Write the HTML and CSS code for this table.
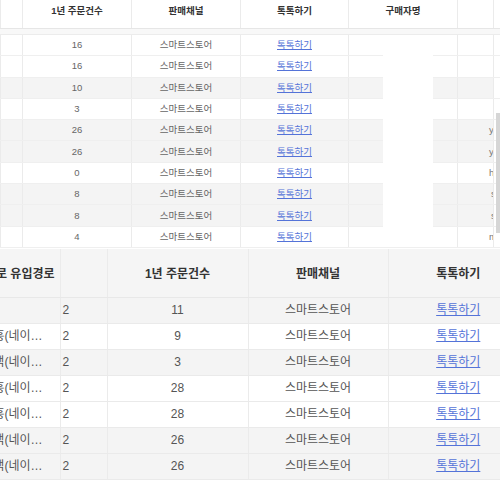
FILE: index.html
```html
<!DOCTYPE html>
<html lang="ko">
<head>
<meta charset="utf-8">
<link rel="stylesheet" href="styles.css">
</head>
<body>
<div class="top">
  <table class="t-head">
    <colgroup><col class="a0"><col class="a1"><col class="a2"><col class="a3"><col class="a4"><col class="a5"><col class="a6"></colgroup>
    <tr><th></th><th>1년 주문건수</th><th>판매채널</th><th>톡톡하기</th><th>구매자명</th><th></th><th class="nb"></th></tr>
  </table>
  <div class="strip"></div>
  <table class="t-body">
    <colgroup><col class="a0"><col class="a1"><col class="a2"><col class="a3"><col class="a4"><col class="a5"><col class="a6"></colgroup>
    <tr><td></td><td>16</td><td>스마트스토어</td><td><a href="#">톡톡하기</a></td><td></td><td class="edge"></td><td class="nb"></td></tr>
    <tr><td></td><td>16</td><td>스마트스토어</td><td><a href="#">톡톡하기</a></td><td></td><td class="edge"></td><td class="nb"></td></tr>
    <tr class="g"><td></td><td>10</td><td>스마트스토어</td><td><a href="#">톡톡하기</a></td><td></td><td class="edge"></td><td class="nb"></td></tr>
    <tr><td></td><td>3</td><td>스마트스토어</td><td><a href="#">톡톡하기</a></td><td></td><td class="edge"></td><td class="nb"></td></tr>
    <tr class="g"><td></td><td>26</td><td>스마트스토어</td><td><a href="#">톡톡하기</a></td><td></td><td class="edge">yu</td><td class="nb"></td></tr>
    <tr class="g"><td></td><td>26</td><td>스마트스토어</td><td><a href="#">톡톡하기</a></td><td></td><td class="edge">yu</td><td class="nb"></td></tr>
    <tr><td></td><td>0</td><td>스마트스토어</td><td><a href="#">톡톡하기</a></td><td></td><td class="edge">h</td><td class="nb"></td></tr>
    <tr class="g"><td></td><td>8</td><td>스마트스토어</td><td><a href="#">톡톡하기</a></td><td></td><td class="edge far">s</td><td class="nb"></td></tr>
    <tr class="g"><td></td><td>8</td><td>스마트스토어</td><td><a href="#">톡톡하기</a></td><td></td><td class="edge far">s</td><td class="nb"></td></tr>
    <tr><td></td><td>4</td><td>스마트스토어</td><td><a href="#">톡톡하기</a></td><td></td><td class="edge">m</td><td class="nb"></td></tr>
  </table>
  <div class="mask"></div>
  <div class="thumb"></div>
</div>
<div class="bottom">
  <table class="b-table">
    <colgroup><col class="b0"><col class="b1"><col class="b2"><col class="b3"><col class="b4"></colgroup>
    <tr class="hd"><th><div class="clip hclip">경로 유입경로</div></th><th></th><th>1년 주문건수</th><th>판매채널</th><th class="last">톡톡하기</th></tr>
    <tr class="g"><td></td><td class="num">2</td><td>11</td><td>스마트스토어</td><td class="last"><a href="#">톡톡하기</a></td></tr>
    <tr><td><div class="clip">유입흥(네이…</div></td><td class="num">2</td><td>9</td><td>스마트스토어</td><td class="last"><a href="#">톡톡하기</a></td></tr>
    <tr class="g"><td><div class="clip">검색(네이…</div></td><td class="num">2</td><td>3</td><td>스마트스토어</td><td class="last"><a href="#">톡톡하기</a></td></tr>
    <tr><td><div class="clip">유입흥(네이…</div></td><td class="num">2</td><td>28</td><td>스마트스토어</td><td class="last"><a href="#">톡톡하기</a></td></tr>
    <tr><td><div class="clip">유입흥(네이…</div></td><td class="num">2</td><td>28</td><td>스마트스토어</td><td class="last"><a href="#">톡톡하기</a></td></tr>
    <tr class="g"><td><div class="clip">검색(네이…</div></td><td class="num">2</td><td>26</td><td>스마트스토어</td><td class="last"><a href="#">톡톡하기</a></td></tr>
    <tr class="g"><td><div class="clip">검색(네이…</div></td><td class="num">2</td><td>26</td><td>스마트스토어</td><td class="last"><a href="#">톡톡하기</a></td></tr>
  </table>
</div>
</body>
</html>
```

FILE: styles.css
```css
html, body {
  margin: 0;
  padding: 0;
  background: #fff;
  width: 500px;
  height: 500px;
  overflow: hidden;
  font-family: "Liberation Sans", "Noto Sans CJK KR", sans-serif;
}

table {
  border-collapse: collapse;
  table-layout: fixed;
  width: 500px;
}

td, th {
  padding: 0;
  border-left: 1px solid #ebebeb;
  border-right: 1px solid #ebebeb;
  text-align: center;
  white-space: nowrap;
  overflow: hidden;
  box-sizing: border-box;
}

a {
  color: #5473d8;
  text-decoration: underline;
}

.top {
  position: relative;
  height: 249px;
  overflow: hidden;
}

.a0 { width: 22px; }
.a1 { width: 109px; }
.a2 { width: 109px; }
.a3 { width: 108px; }
.a4 { width: 109px; }
.a5 { width: 36px; }
.a6 { width: 7px; }

.t-head th {
  height: 28px;
  vertical-align: top;
  padding-top: 3px;
  font-size: 9.5px;
  font-weight: bold;
  color: #333;
  border-bottom: 1px solid #e6e6e6;
}

.strip {
  height: 5px;
  background: #f8f8f8;
  border-bottom: 1px solid #ececec;
}

.t-body tr { height: 21.3px; }

.t-body td {
  height: 21.3px;
  line-height: 12px;
  font-size: 9.5px;
  color: #666;
  border-bottom: 1px solid #efefef;
}

.t-body a { font-size: 9.5px; }

.nb {
  border-left: none !important;
  border-right: none !important;
  background: #fff;
}

.t-body td.edge {
  text-align: left;
  padding-left: 31px;
  color: #777;
}

.t-body td.edge.far { padding-left: 33px; }

tr.g td { background: #f4f4f4; }
tr.g td.nb { background: #fff; }

.mask {
  position: absolute;
  left: 383px;
  top: 35px;
  width: 50px;
  height: 212px;
  background: #fff;
}

.thumb {
  position: absolute;
  left: 496px;
  top: 113px;
  width: 4px;
  height: 120px;
  background: #d6d6d6;
}

.b0 { width: 60px; }
.b1 { width: 47px; }
.b2 { width: 141px; }
.b3 { width: 140px; }
.b4 { width: 112px; }

.b-table th {
  height: 48px;
  background: #f5f5f5;
  font-size: 12px;
  font-weight: bold;
  color: #333;
  border-bottom: 1px solid #e8e8e8;
}

.b-table tr { height: 26px; }

.b-table td {
  height: 26px;
  line-height: 14px;
  font-size: 12px;
  color: #555;
  border-bottom: 1px solid #eaeaea;
}

.b-table td.num {
  text-align: left;
  padding-left: 2px;
}

.b-table .last {
  padding-left: 28px;
  border-right: none;
}

.b-table tr > :first-child { border-left: none; }

.clip {
  display: flex;
  justify-content: flex-end;
  overflow: hidden;
  white-space: nowrap;
  padding-right: 17px;
}

.hclip { padding-right: 5px; }
```
